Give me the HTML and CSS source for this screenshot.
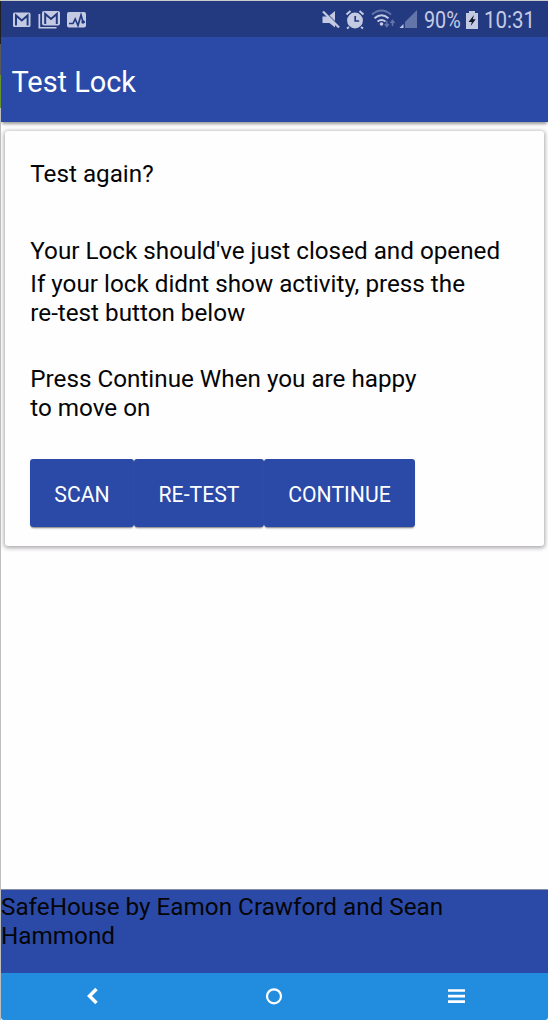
FILE: index.html
```
<!DOCTYPE html>
<html lang="en">
<head>
<meta charset="utf-8">
<title>Test Lock</title>
<link rel="stylesheet" href="styles.css">
</head>
<body>
<div class="frame">
  <div class="edge"><i class="edge-top"></i><i class="edge-mid"></i><i class="edge-green"></i></div>
  <div class="screen">
    <div class="status">
      <svg class="notices" width="78" height="20" viewBox="12 10 78 20">
        <g fill="#c5cae3">
          <rect x="13" y="12.500" width="17.500" height="14.500" rx="1.500"/>
          <path d="M38.500 14v14.500h18v-1.600h-16.300V14z"/>
          <rect x="42" y="11" width="18" height="14.500" rx="2"/>
          <rect x="67" y="12" width="19" height="15.500" rx="2"/>
        </g>
        <g fill="none" stroke="#233a80" stroke-width="2">
          <path d="M16 25.500V15.500l5.800 5 5.800-5v10M45.200 24V14l5.800 5 5.800-5v10"/>
          <path d="M69 23.500h4l2.200-4.500 2.800 6.500 3-10.500 2 7h2" stroke-width="1.700"/>
        </g>
        <circle cx="83" cy="22" r="1.700" fill="#233a80"/>
      </svg>
      <div class="status-right">
        <svg width="98" height="22" viewBox="321 9 98 22">
          <g fill="#c5cae3">
            <path d="M322.500 16.500h5l7.500 7.500v3.500l-5.500-4.500h-7z"/>
            <path d="M329.500 15.500l5.500-4.500v10z"/>
            <circle cx="355" cy="20.500" r="7.900"/>
            <path d="M349 27l-2 1.500M361 27l2 1.500M346.500 14.500l4-3.500M363.500 14.500l-4-3.500" stroke="#c5cae3" stroke-width="2"/>
            <circle cx="381.500" cy="24" r="1.800"/>
            <path d="M399.500 28l4-4v4z"/>
          </g>
          <path d="M323 11.500l16 16" stroke="#c5cae3" stroke-width="2.300"/>
          <path d="M355.200 16v5h4" fill="none" stroke="#233a80" stroke-width="1.700"/>
          <path d="M372 14.500q9.500-8 19 0" fill="none" stroke="#6475a9" stroke-width="1.900"/>
          <path d="M374.500 18.300q7-6 14 0M377.500 21.500q4-3 8 0" fill="none" stroke="#c5cae3" stroke-width="2"/>
          <path d="M386.800 21v5m-2-2l2 2.500 2-2.500M392.500 26v-5m-2 2l2-2.500 2 2.500" fill="none" stroke="#6475a9" stroke-width="1.500"/>
          <path d="M405 28V22l12-12v18z" fill="#6475a9"/>
        </svg>
        <span class="percent">90%</span>
        <svg class="battery" width="14" height="20" viewBox="0 0 14 20">
          <path d="M4 1h6v2h3v16H1V3h3z" fill="#c5cae3"/>
          <path d="M9 5L3.500 12h3.300L5.700 16l5-6.800H7.800z" fill="#15182a"/>
        </svg>
        <span class="clock">10:31</span>
      </div>
    </div>
    <header class="bar"><h1>Test Lock</h1></header>
    <main class="content">
      <section class="card">
        <p class="question">Test again?</p>
        <p class="result">Your Lock should've just closed and opened</p>
        <p class="hint">If your lock didnt show activity, press the<br>re-test button below</p>
        <p class="next">Press Continue When you are happy<br>to move on</p>
        <div class="actions">
          <button class="btn scan">SCAN</button>
          <button class="btn retest">RE-TEST</button>
          <button class="btn continue">CONTINUE</button>
        </div>
      </section>
    </main>
    <footer class="footer">SafeHouse by Eamon Crawford and Sean<br>Hammond</footer>
    <nav class="nav">
      <svg width="182" height="47" viewBox="0 0 182 47"><path d="M95.500 16l-7 7 7 7" fill="none" stroke="#fff" stroke-width="3.500"/></svg>
      <svg width="182" height="47" viewBox="0 0 182 47"><circle cx="91" cy="23.300" r="7" fill="none" stroke="#fff" stroke-width="2.200"/></svg>
      <svg width="183" height="47" viewBox="0 0 183 47"><path d="M83 17.500h17M83 23.200h17M83 28.700h17" stroke="#fff" stroke-width="2.700"/></svg>
    </nav>
  </div>
</div>
</body>
</html>
```
FILE: styles.css
```
* { box-sizing: border-box; }
body { margin: 0; font-family: Roboto, sans-serif; color: #050507; }
p, h1 { margin: 0; font-weight: 400; }
svg { display: block; flex: none; }
.frame { display: flex; width: 548px; height: 1020px; overflow: hidden; background: #fff; border-top: 1px solid #cacaca; }
.edge { width: 1px; background: #bebebe; display: flex; flex-direction: column; flex: none; }
.edge-top { height: 43px; background: #202020; }
.edge-mid { height: 31px; background: #595959; }
.edge-green { height: 33px; background: #65922b; }
.screen { width: 547px; display: flex; flex-direction: column; background: #fefefe; clip-path: inset(0); }
.status { height: 36px; background: #233a80; display: flex; justify-content: space-between; padding: 0 14px 0 11px; color: #c5cae3; flex: none; }
.notices { margin-top: 9px; }
.status-right { display: flex; font-size: 23px; line-height: 40px; white-space: nowrap; }
.status-right > svg:first-child { margin-top: 8px; }
.percent { width: 37px; margin-left: 5px; transform: scaleX(.86); transform-origin: left; }
.battery { margin: 9px 5px 0 4px; }
.clock { width: 50px; transform: scaleX(.89); transform-origin: left; }
.bar { height: 85px; background: #2b4aa7; color: #fff; padding: 28px 10.500px 0; box-shadow: 0 3px 3px -1px #999; flex: none; }
.bar h1 { font-size: 28.900px; line-height: 34px; }
.content { flex: 1; padding: 9px 4px 0 4px; }
.card { width: 539px; height: 415px; padding: 29px 25px 0; background: #fefefe; border-radius: 3px; box-shadow: 0 1px 4px 1px #aaa6ac; font-size: 24.240px; line-height: 29px; white-space: nowrap; }
.question, .result, .hint, .next { padding-left: .3px; }
.result { margin-top: 48px; }
.hint { margin-top: 4px; }
.next { margin-top: 37px; }
.actions { display: flex; margin-top: 36px; }
.btn { height: 68px; border: 0; border-radius: 3px; background: #2b4aa7; color: #fff; font: 21.200px/24px Roboto, sans-serif; padding: 3px 0 0; box-shadow: 0 2px 2px -1px #777; }
.scan { width: 104px; }
.retest { width: 130px; }
.continue { width: 151px; }
.footer { height: 84px; background: #2b4aa7; border-top: 1px solid #858da6; padding-top: 2px; font-size: 24.270px; line-height: 29px; white-space: nowrap; flex: none; }
.nav { height: 47px; background: #228ddf; display: flex; flex: none; border-radius: 0 0 3px 3px; }
```
